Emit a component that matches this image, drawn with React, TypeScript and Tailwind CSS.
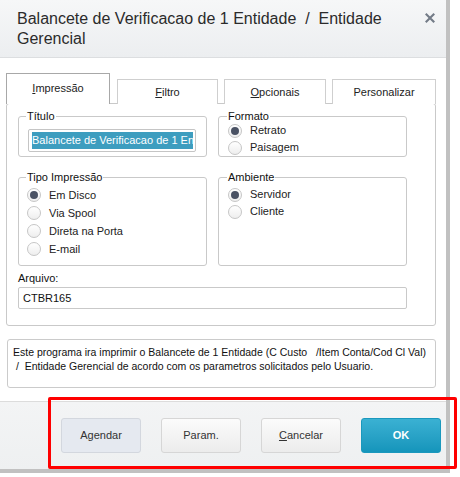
import React from 'react';

const font = "font-['Liberation_Sans',Arial,sans-serif]";

const Radio: React.FC<{ label: string; checked?: boolean; h?: string }> = ({ label, checked, h = 'h-[18px]' }) => (
  <div className={`flex items-center ${h} pl-[8px]`}>
    <span className="w-[14px] h-[14px] rounded-full border border-[#c6c6c6] bg-gradient-to-b from-white to-[#eeeeee] flex items-center justify-center shrink-0">
      {checked && <span className="w-[8px] h-[8px] rounded-full bg-[#4a5264]" />}
    </span>
    <span className="ml-[8px] text-[11px] leading-[13px] text-[#222]">{label}</span>
  </div>
);

const Group: React.FC<{ title: string; className?: string; children: React.ReactNode }> = ({ title, className = '', children }) => (
  <fieldset className={`border border-[#c9c9c9] rounded-[3px] min-w-0 ${className}`}>
    <legend className="ml-[7px] px-px text-[11px] leading-[11px] text-[#111]">{title}</legend>
    {children}
  </fieldset>
);

const tabs = [
  { label: 'Impressão', key: 'I', rest: 'mpressão', w: 'w-[104px]', active: true },
  { label: 'Filtro', key: 'F', rest: 'iltro', w: 'w-[101px]' },
  { label: 'Opcionais', key: 'O', rest: 'pcionais', w: 'w-[102px]' },
  { label: 'Personalizar', key: '', rest: 'Personalizar', w: 'w-[104px]' },
];

export default function App() {
  return (
    <div className={`relative w-[460px] h-[477px] bg-white overflow-hidden ${font}`}>
      <div className="w-[450px] h-[473px] border-r-4 border-b-4 border-[#c1c1c1] flex flex-col">
        {/* header */}
        <div className="h-[58px] shrink-0 flex border-b border-[#dcdee0] bg-gradient-to-b from-[#f6f7f8] to-[#eceef0]">
          <div className="w-[395px] pl-[17px] pt-[9px] text-[16px] leading-[20px] text-[#2b2b2b] whitespace-pre-wrap">
            {'Balancete de Verificacao de 1 Entidade  /  Entidade Gerencial'}
          </div>
          <button className="ml-auto mr-[11px] mt-[13px] w-[10px] h-[10px] flex items-center justify-center">
            <svg width="10" height="10" viewBox="0 0 10 10">
              <path d="M1.5 1.5 L8.5 8.5 M8.5 1.5 L1.5 8.5" stroke="#737b87" strokeWidth="2.1" strokeLinecap="square" />
            </svg>
          </button>
        </div>

        {/* body */}
        <div className="flex-1 bg-white px-[6px] pt-[15px]">
          <div className="flex items-end h-[31px]">
            {tabs.map((t, i) => (
              <div
                key={t.label}
                className={`${t.w} ${i === 0 ? '' : i === 1 ? 'ml-[7px]' : 'ml-[6px]'} ${
                  t.active
                    ? 'h-[31px] border border-b-0 border-[#a8a8a8] pt-[8px]'
                    : 'h-[25px] border border-b-0 border-[#cfcfcf] pt-[6px]'
                } bg-white text-center text-[11px] leading-[13px] text-[#222]`}
              >
                {t.key && <u>{t.key}</u>}
                {t.rest}
              </div>
            ))}
          </div>

          <div className="-mt-px w-[430px] h-[223px] border border-[#c9c9c9] rounded-[3px] pl-[11px] pt-[7px]">
            <div className="grid grid-cols-[189px_189px] gap-x-[11px] gap-y-[15px]">
              <Group title="Título" className="pb-[4px]">
                <div className="ml-[9px] mt-[7px] w-[168px] h-[23px] border border-[#c5c5c5] rounded-[2px] pl-[3px] pr-[2px] pt-[2px] overflow-hidden">
                  <div className="overflow-hidden">
                    <span className="block whitespace-nowrap bg-[#3d9dbf] text-white text-[11px] leading-[17px] h-[17px]">
                      Balancete de Verificacao de 1 Entidade
                    </span>
                  </div>
                </div>
              </Group>
              <Group title="Formato" className="pl-px">
                <Radio label="Retrato" checked h="h-[17px]" />
                <Radio label="Paisagem" h="h-[17px]" />
              </Group>
              <Group title="Tipo Impressão" className="pt-[3px] pb-[7px]">
                <Radio label="Em Disco" checked />
                <Radio label="Via Spool" />
                <Radio label="Direta na Porta" />
                <Radio label="E-mail" />
              </Group>
              <Group title="Ambiente" className="pt-[3px] pb-[7px] pl-px">
                <Radio label="Servidor" checked h="h-[17px]" />
                <Radio label="Cliente" h="h-[17px]" />
              </Group>
            </div>

            <div className="mt-[6px] text-[11px] leading-[13px] text-[#111]">Arquivo:</div>
            <div className="mt-[2px] w-[389px] h-[22px] border border-[#c9c9c9] rounded-[2px] pl-[4px] text-[11px] leading-[20px] text-[#111]">
              CTBR165
            </div>
          </div>

          <div className="mt-[13px] ml-px w-[429px] h-[49px] border border-[#cbcbcb] rounded-[3px] pl-[5px] pt-[5px] text-[10.5px] leading-[14px] text-[#111] whitespace-pre">
            {'Este programa ira imprimir o Balancete de 1 Entidade (C Custo   /Item Conta/Cod Cl Val)\n /  Entidade Gerencial de acordo com os parametros solicitados pelo Usuario.'}
          </div>
        </div>

        {/* footer */}
        <div className="h-[68px] shrink-0 border-t border-[#dcdcdc] bg-gradient-to-b from-[#f3f4f5] to-[#eef0f1] flex justify-end items-start gap-[20px] pr-[5px] pt-[16px]">
          <button className="w-[80px] h-[35px] rounded-[3px] border border-[#d3d7de] bg-[#e5e9f0] text-[11px] text-[#333]">
            Agendar
          </button>
          <button className="w-[80px] h-[35px] rounded-[3px] border border-[#d6d6d6] bg-gradient-to-b from-[#fbfbfb] to-[#ececec] text-[11px] text-[#333]">
            Param.
          </button>
          <button className="w-[80px] h-[35px] rounded-[3px] border border-[#d6d6d6] bg-gradient-to-b from-[#fbfbfb] to-[#ececec] text-[11px] text-[#333]">
            <u>C</u>ancelar
          </button>
          <button className="w-[80px] h-[35px] rounded-[3px] border border-[#1a98bd] bg-gradient-to-b from-[#3ab1d3] to-[#1495bb] text-[11px] font-bold text-white">
            OK
          </button>
        </div>
      </div>

      {/* annotation */}
      <div className="absolute left-[48px] top-[397px] w-[409px] h-[72px] border-[3px] border-[#ff0000] rounded-[2px]" />
    </div>
  );
}
